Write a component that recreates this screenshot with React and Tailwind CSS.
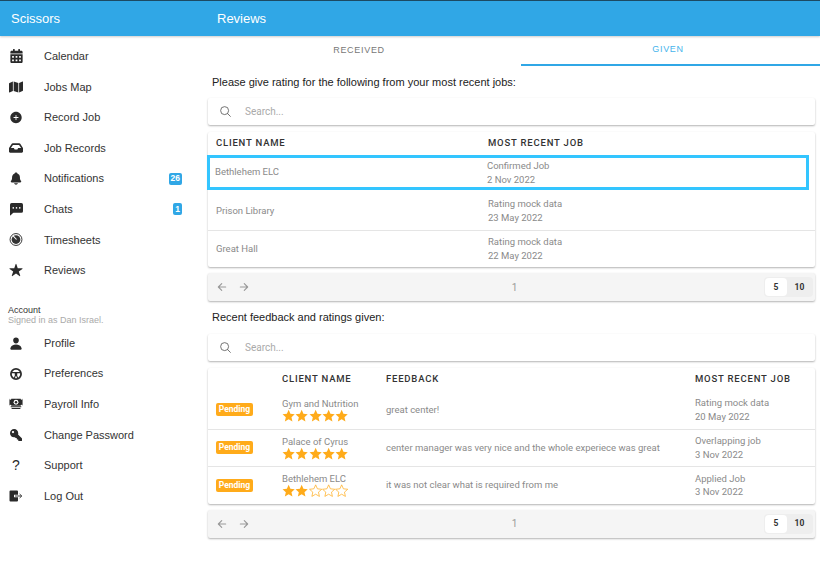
import React from 'react';
import { FaCalendarAlt, FaMap, FaInbox, FaKey } from 'react-icons/fa';
import { IoAddCircle, IoNotifications, IoStar, IoPerson, IoSearchOutline, IoArrowBack, IoArrowForward } from 'react-icons/io5';
import { BsChatLeftDotsFill } from 'react-icons/bs';

function TimesheetIcon() {
  return (
    <svg viewBox="0 0 16 16" className="w-[15px] h-[15px]">
      <circle cx="8" cy="8" r="6.8" fill="none" stroke="#333" strokeWidth="1.1" />
      <circle cx="8" cy="8" r="5" fill="#333" />
      <path d="M4.5 3.6 L8.6 8" stroke="#fff" strokeWidth="1.2" />
    </svg>
  );
}

function PrefsIcon() {
  return (
    <svg viewBox="0 0 16 16" className="w-[14px] h-[14px]">
      <circle cx="8" cy="8" r="5.8" fill="none" stroke="#2a2a2a" strokeWidth="2" />
      <circle cx="8" cy="8" r="1.6" fill="#2a2a2a" />
      <path d="M2.5 6.5 L13.5 6.5 M8 8 L6 13 M8 8 L10 13" stroke="#2a2a2a" strokeWidth="1.3" />
    </svg>
  );
}

function PayrollIcon() {
  return (
    <svg viewBox="0 0 16 14" className="w-[16px] h-[14px]">
      <rect x="0.5" y="1" width="15" height="8" fill="#2a2a2a" />
      <circle cx="8" cy="5" r="2.8" fill="#fff" />
      <circle cx="8" cy="5" r="1.4" fill="#2a2a2a" />
      <circle cx="1.5" cy="1" r="1.2" fill="#fff" />
      <circle cx="14.5" cy="1" r="1.2" fill="#fff" />
      <circle cx="1.5" cy="9" r="1.2" fill="#fff" />
      <circle cx="14.5" cy="9" r="1.2" fill="#fff" />
      <path d="M2 10.2 H14 M3 12.2 H13" stroke="#2a2a2a" strokeWidth="1.3" />
    </svg>
  );
}

function LogoutIcon() {
  return (
    <svg viewBox="0 0 14 12" className="w-[14px] h-[12px]">
      <path d="M1.5 0.5 H8 a1 1 0 0 1 1 1 V4.8 H5 V7.2 H9 V10.5 a1 1 0 0 1 -1 1 H1.5 a1 1 0 0 1 -1 -1 V1.5 a1 1 0 0 1 1 -1 Z" fill="#2a2a2a" />
      <path d="M6 6 H12.5 M10.6 4 L12.8 6 L10.6 8" fill="none" stroke="#2a2a2a" strokeWidth="0.9" />
    </svg>
  );
}

const mainNav = [
  { label: 'Calendar', icon: <FaCalendarAlt className="w-[13px] h-[14px] text-[#2a2a2a]" /> },
  { label: 'Jobs Map', icon: <FaMap className="w-[14px] h-[14px] text-[#2a2a2a]" /> },
  { label: 'Record Job', icon: <IoAddCircle className="w-[15px] h-[15px] text-[#2a2a2a]" /> },
  { label: 'Job Records', icon: <FaInbox className="w-[14px] h-[14px] text-[#2a2a2a]" /> },
  { label: 'Notifications', icon: <IoNotifications className="w-[15px] h-[15px] text-[#2a2a2a]" />, badge: '26' },
  { label: 'Chats', icon: <BsChatLeftDotsFill className="w-[13px] h-[13px] text-[#2a2a2a]" />, badge: '1' },
  { label: 'Timesheets', icon: <TimesheetIcon /> },
  { label: 'Reviews', icon: <IoStar className="w-[16px] h-[16px] text-[#2a2a2a]" /> },
];

const accountNav = [
  { label: 'Profile', icon: <IoPerson className="w-[15px] h-[15px] text-[#2a2a2a]" /> },
  { label: 'Preferences', icon: <PrefsIcon /> },
  { label: 'Payroll Info', icon: <PayrollIcon /> },
  { label: 'Change Password', icon: <FaKey className="w-[12px] h-[12px] text-[#2a2a2a] -scale-x-100" /> },
  { label: 'Support', icon: <span className="text-[14px] leading-none text-[#2a2a2a]">?</span> },
  { label: 'Log Out', icon: <LogoutIcon /> },
];

const ratingRows = [
  { client: 'Prison Library', job: 'Rating mock data', date: '23 May 2022' },
  { client: 'Great Hall', job: 'Rating mock data', date: '22 May 2022' },
];

const feedbackRows = [
  { client: 'Gym and Nutrition', stars: 5, text: 'great center!', job: 'Rating mock data', date: '20 May 2022' },
  { client: 'Palace of Cyrus', stars: 5, text: 'center manager was very nice and the whole experiece was great', job: 'Overlapping job', date: '3 Nov 2022' },
  { client: 'Bethlehem ELC', stars: 2, text: 'it was not clear what is required from me', job: 'Applied Job', date: '3 Nov 2022' },
];

function NavItem({ item }) {
  return (
    <div className="flex items-center h-[30.6px] pr-[26px]">
      <div className="w-[44px] pl-[9px] flex items-center">
        <div className="w-[14px] flex justify-center">{item.icon}</div>
      </div>
      <span className="flex-1 text-[11px] text-[#333]">{item.label}</span>
      {item.badge && (
        <span className="bg-[#30a7e6] text-white text-[8.5px] font-bold rounded-[2px] h-[12px] min-w-[9px] px-[2px] flex items-center justify-center">
          {item.badge}
        </span>
      )}
    </div>
  );
}

function Sidebar() {
  return (
    <div className="w-[208px] shrink-0 pt-[5px] font-['Liberation_Sans',sans-serif]">
      {mainNav.map((item) => <NavItem key={item.label} item={item} />)}
      <div className="pl-[8px] mt-[19px] mb-[2px] text-[9px] leading-[10.5px]">
        <div className="text-[#333]">Account</div>
        <div className="text-[#aaa]">Signed in as Dan Israel.</div>
      </div>
      {accountNav.map((item) => <NavItem key={item.label} item={item} />)}
    </div>
  );
}

function SearchBox() {
  return (
    <div className="h-[27px] bg-white rounded-[2px] shadow-[0_1px_2px_rgba(0,0,0,0.3)] flex items-center pl-[11px] gap-[13px]">
      <IoSearchOutline className="w-[13px] h-[13px] text-[#555]" />
      <span className="text-[10px] text-[#aaa]">Search...</span>
    </div>
  );
}

function Pager() {
  return (
    <div className="h-[28px] bg-[#f5f5f5] rounded-[2px] shadow-[0_1px_2px_rgba(0,0,0,0.3)] grid grid-cols-3 items-center pl-[8px] pr-[2px]">
      <div className="flex gap-[10px] text-[#999]">
        <IoArrowBack className="w-[12px] h-[12px]" />
        <IoArrowForward className="w-[12px] h-[12px]" />
      </div>
      <div className="text-center text-[10px] text-[#999]">1</div>
      <div className="flex justify-end">
        <div className="flex bg-[#eee] rounded-[4px] h-[20px] p-[1px] text-[8.5px] font-bold text-[#333]">
          <span className="w-[22px] bg-white rounded-[4px] flex items-center justify-center">5</span>
          <span className="w-[25px] flex items-center justify-center">10</span>
        </div>
      </div>
    </div>
  );
}

function Stars({ count }) {
  return (
    <div className="flex">
      {[0, 1, 2, 3, 4].map((i) => (
        <svg key={i} viewBox="0 0 24 24" className="w-[13.3px] h-[13.3px]">
          <path
            d="M12 1.5l3.2 7.2 7.8.8-5.9 5.2 1.7 7.7L12 18.4l-6.8 4 1.7-7.7L1 9.5l7.8-.8z"
            fill={i < count ? '#ffab1a' : 'none'}
            stroke="#ffab1a"
            strokeWidth={i < count ? 0 : 1.3}
          />
        </svg>
      ))}
    </div>
  );
}

function JobCell({ job, date }) {
  return (
    <div className="text-[9.5px] leading-[13.5px] text-[#8a8a8a]">
      <div>{job}</div>
      <div>{date}</div>
    </div>
  );
}

const headCls = 'text-[9.5px] font-medium tracking-[0.8px] text-[#333]';

function RatingTable() {
  return (
    <div className="bg-white rounded-[2px] shadow-[0_1px_2px_rgba(0,0,0,0.3)] relative">
      <div className="grid grid-cols-[272px_1fr] items-center h-[23px] pl-[8px]">
        <span className={headCls}>CLIENT NAME</span>
        <span className={headCls}>MOST RECENT JOB</span>
      </div>
      <div className="grid grid-cols-[272px_1fr] items-center h-[35px] pl-[5px] -ml-px mr-[6px] border-[3px] border-[#33c5ff]">
        <span className="text-[9.5px] text-[#8a8a8a]">Bethlehem ELC</span>
        <JobCell job="Confirmed Job" date="2 Nov 2022" />
      </div>
      {ratingRows.map((row, i) => (
        <div key={row.client} className={`grid grid-cols-[272px_1fr] items-center h-[37.5px] pl-[8px] ${i === 0 ? 'mt-[2px]' : 'border-t border-[#e5e5e5]'}`}>
          <span className="text-[9.5px] text-[#8a8a8a]">{row.client}</span>
          <JobCell job={row.job} date={row.date} />
        </div>
      ))}
    </div>
  );
}

function FeedbackTable() {
  return (
    <div className="bg-white rounded-[2px] shadow-[0_1px_2px_rgba(0,0,0,0.3)]">
      <div className="grid grid-cols-[66px_104px_309px_1fr] items-center h-[23px] pl-[8px]">
        <span />
        <span className={headCls}>CLIENT NAME</span>
        <span className={headCls}>FEEDBACK</span>
        <span className={headCls}>MOST RECENT JOB</span>
      </div>
      {feedbackRows.map((row, i) => (
        <div key={row.client} className={`grid grid-cols-[66px_104px_309px_1fr] items-center h-[37.5px] pl-[8px] ${i > 0 ? 'border-t border-[#e5e5e5]' : ''}`}>
          <span className="bg-[#ffab1a] text-white text-[8.5px] font-bold rounded-[2px] w-[37px] h-[13px] flex items-center justify-center">Pending</span>
          <div className="text-[9.5px] leading-[11px] text-[#8a8a8a]">
            <div>{row.client}</div>
            <Stars count={row.stars} />
          </div>
          <span className="text-[9.5px] text-[#8a8a8a]">{row.text}</span>
          <JobCell job={row.job} date={row.date} />
        </div>
      ))}
    </div>
  );
}

export default function App() {
  return (
    <div className="h-screen overflow-hidden bg-white flex flex-col font-['Roboto',sans-serif]">
      <div className="h-[36px] shrink-0 bg-[#30a7e6] border-t border-[#1c4a63] shadow-[0_1px_2px_rgba(0,0,0,0.2)] flex items-center text-white text-[13px] font-['Liberation_Sans',sans-serif] z-10">
        <div className="w-[217px] pl-[11px]">Scissors</div>
        <div>Reviews</div>
      </div>
      <div className="flex flex-1">
        <Sidebar />
        <div className="flex-1 min-w-0">
          <div className="flex h-[30px] -ml-[11px] text-[9px] font-medium tracking-[0.7px] font-['Liberation_Sans',sans-serif]">
            <div className="w-[324px] flex items-center justify-center text-[#777]">RECEIVED</div>
            <div className="flex-1 flex items-center justify-center pr-[5px] text-[#45b4ec] border-b-2 border-[#30a7e6]">GIVEN</div>
          </div>
          <div className="pr-[5px]">
            <div className="pl-[4px] pt-[9px] pb-[9px] text-[11px] leading-[14px] text-[#222] font-['Liberation_Sans',sans-serif]">Please give rating for the following from your most recent jobs:</div>
            <SearchBox />
            <div className="mt-[7px]"><RatingTable /></div>
            <div className="mt-[6px]"><Pager /></div>
            <div className="pl-[4px] pt-[9px] pb-[10px] text-[11px] leading-[14px] text-[#222] font-['Liberation_Sans',sans-serif]">Recent feedback and ratings given:</div>
            <SearchBox />
            <div className="mt-[7px]"><FeedbackTable /></div>
            <div className="mt-[6px]"><Pager /></div>
          </div>
        </div>
      </div>
    </div>
  );
}
